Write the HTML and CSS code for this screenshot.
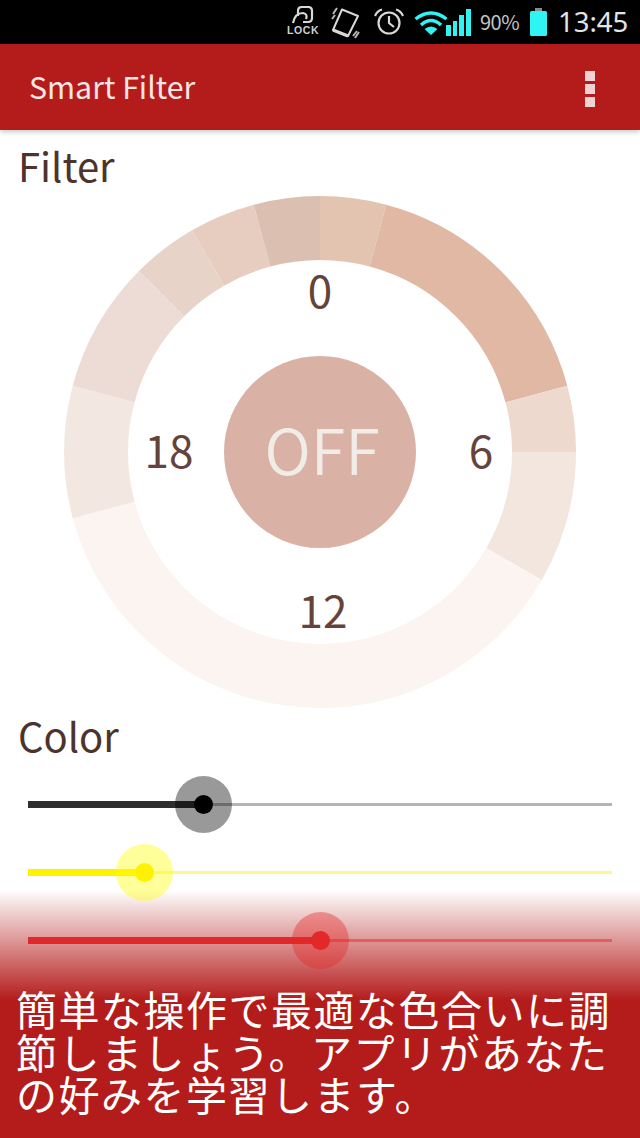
FILE: index.html
```html
<!DOCTYPE html>
<html lang="ja">
<head>
<meta charset="utf-8">
<title>Smart Filter</title>
<link rel="stylesheet" href="styles.css">
</head>
<body>
<div class="screen">
  <div class="statusbar">
    <div class="lock">
      <svg class="lock-icon" viewBox="0 0 26 18" width="26" height="18"><g fill="none" stroke="#d8d8d8" stroke-width="2.200"><path d="M8 10 V5 Q8 1 12 1 H18 Q22 1 22 5 V12 Q22 16 18 16 H13"/><path d="M3 17 Q5 7 13 7 Q18 8 16 13"/></g></svg>
      <span class="lock-label">LOCK</span>
    </div>
    <svg class="st-rotate" viewBox="0 0 30 32" width="30" height="32"><g fill="none" stroke="#d8d8d8" stroke-width="2"><path d="M12 2.500 L28 9 L18 29 L3 23 Z" stroke-linejoin="round"/><path d="M3 23 L18 29" stroke-width="3.500"/><path d="M3 7 L7 1 M2 12 L5 8 M23 29 L27 24 M25 31 L29 25" stroke="#b8b8b8"/></g></svg>
    <svg class="st-alarm" viewBox="0 0 30 28" width="30" height="28"><g fill="none" stroke="#d8d8d8" stroke-width="2.200"><circle cx="15" cy="15" r="10.500"/><path d="M15 8 V15 L20 19"/><path d="M1 8 Q3 3 8 1.500 M29 8 Q27 3 22 1.500"/></g></svg>
    <svg class="st-wifi" viewBox="0 0 34 26" width="34" height="26"><g fill="none" stroke="#2ef4f4" stroke-width="3.400"><path d="M1.500 9 Q17 -3 32.500 9"/><path d="M7 15 Q17 6 27 15"/></g><path d="M17 25 L10.500 19 Q17 14 23.500 19 Z" fill="#2ef4f4"/></svg>
    <div class="signal"><i class="b1"></i><i class="b2"></i><i class="b3"></i><i class="b4"></i></div>
    <span class="st-pct">90%</span>
    <svg class="st-batt" viewBox="0 0 17 28" width="17" height="28"><rect x="5" y="0" width="7" height="3" fill="#8a8a8a"/><rect x="0" y="3" width="17" height="25" rx="1.500" fill="#2ef4f4"/></svg>
    <span class="st-time">13:45</span>
  </div>
  <header class="appbar">
    <span class="app-title">Smart Filter</span>
    <div class="menu"><i></i><i></i><i></i></div>
  </header>
  <main class="content">
    <h2 class="heading">Filter</h2>
    <div class="dial">
      <svg viewBox="0 0 512 512" width="512" height="512">
        <g class="ring" transform="rotate(-90 256 256)">
          <circle class="seg s0" cx="256" cy="256" r="224" pathLength="360" stroke-dasharray="15 345" stroke-dashoffset="0"/>
          <circle class="seg s1" cx="256" cy="256" r="224" pathLength="360" stroke-dasharray="60 300" stroke-dashoffset="-15"/>
          <circle class="seg s2" cx="256" cy="256" r="224" pathLength="360" stroke-dasharray="15 345" stroke-dashoffset="-75"/>
          <circle class="seg s3" cx="256" cy="256" r="224" pathLength="360" stroke-dasharray="30 330" stroke-dashoffset="-90"/>
          <circle class="seg s4" cx="256" cy="256" r="224" pathLength="360" stroke-dasharray="135 225" stroke-dashoffset="-120"/>
          <circle class="seg s5" cx="256" cy="256" r="224" pathLength="360" stroke-dasharray="30 330" stroke-dashoffset="-255"/>
          <circle class="seg s6" cx="256" cy="256" r="224" pathLength="360" stroke-dasharray="30 330" stroke-dashoffset="-285"/>
          <circle class="seg s7" cx="256" cy="256" r="224" pathLength="360" stroke-dasharray="15 345" stroke-dashoffset="-315"/>
          <circle class="seg s8" cx="256" cy="256" r="224" pathLength="360" stroke-dasharray="15 345" stroke-dashoffset="-330"/>
          <circle class="seg s9" cx="256" cy="256" r="224" pathLength="360" stroke-dasharray="15 345" stroke-dashoffset="-345"/>
        </g>
        <circle class="hub" cx="256" cy="256" r="96"/>
        <text class="hub-label" x="258" y="279" text-anchor="middle">OFF</text>
        <text class="tick" x="256" y="112" text-anchor="middle">0</text>
        <text class="tick" x="417" y="272" text-anchor="middle">6</text>
        <text class="tick" x="259" y="432" text-anchor="middle">12</text>
        <text class="tick" x="105" y="272" text-anchor="middle">18</text>
      </svg>
    </div>
    <h2 class="heading heading-color">Color</h2>
    <div class="sliders">
      <div class="slider black">
        <div class="fill f-black"></div><div class="rest"></div><div class="thumb"><i></i></div>
      </div>
      <div class="slider yellow">
        <div class="fill f-yellow"></div><div class="rest"></div><div class="thumb"><i></i></div>
      </div>
      <div class="slider red">
        <div class="fill f-red"></div><div class="rest"></div><div class="thumb"><i></i></div>
      </div>
    </div>
  </main>
  <div class="coach">
    <p>簡単な操作で最適な色合いに調節しましょう。アプリがあなたの好みを学習します。</p>
  </div>
</div>
</body>
</html>
```
FILE: styles.css
```css
* { box-sizing: border-box; }
html, body { margin: 0; padding: 0; background: #fff; }
body { font-family: "Noto Sans CJK JP", "Noto Sans", sans-serif; }
.screen { position: relative; width: 640px; height: 1138px; overflow: hidden; background: #fff; }

.statusbar { height: 44px; background: #000; display: flex; align-items: center; color: #d8d8d8; padding-left: 290px; }
.lock { width: 26px; height: 30px; display: flex; flex-direction: column; align-items: center; }
.lock-icon { width: 26px; height: 18px; margin-top: -1px; }
.lock-label { font: 700 10.500px/11px "Liberation Sans", sans-serif; letter-spacing: 0.600px; margin-top: 1px; color: #cfcfcf; }
.st-rotate { margin-left: 14px; margin-top: 1px; }
.st-alarm { margin-left: 14px; }
.st-wifi { margin-left: 10px; margin-top: 1px; }
.signal { width: 26px; height: 27px; margin-left: -2px; display: flex; align-items: flex-end; gap: 2.200px; }
.signal i { display: block; width: 4.500px; background: #2ef4f4; }
.b1 { height: 11px; } .b2 { height: 15px; } .b3 { height: 21px; } .b4 { height: 27px; }
.st-pct { margin-left: 8px; width: 41px; font: 400 20px/28px "Noto Sans CJK JP", sans-serif; letter-spacing: -0.500px; color: #c4c4c4; }
.st-batt { margin-left: 9px; }
.st-time { margin-left: 11px; font: 400 27.500px/36px "Noto Sans", sans-serif; color: #e4e4e4; }

.appbar { height: 86px; background: #b41c1b; display: flex; align-items: center; justify-content: space-between; padding: 0 45px 0 29px; box-shadow: 0 2px 5px rgba(0,0,0,.22); position: relative; }
.app-title { color: #f6e6e6; font-size: 30.300px; line-height: 46px; font-weight: 400; margin-top: -3px; }
.menu { display: flex; flex-direction: column; gap: 3px; margin-top: 3px; }
.menu i { display: block; width: 10px; height: 10px; background: #f1d2d2; }

.content { padding: 0 28px 0 18px; }
.heading { margin: 0; font-size: 40px; line-height: 60px; font-weight: 400; color: #4e322c; }
.heading:first-child { padding-top: 5px; height: 66px; }
.dial { width: 512px; height: 512px; margin: 0 0 0 46px; }
.dial svg { display: block; }
.seg { fill: none; stroke-width: 64; }
.s0 { stroke: #e3c4b1; } .s1 { stroke: #e0b8a3; } .s2 { stroke: #eed9ce; } .s3 { stroke: #f2e6df; }
.s4 { stroke: #fbf4f0; } .s5 { stroke: #f2e8e1; } .s6 { stroke: #ecdcd5; } .s7 { stroke: #e8d3c8; }
.s8 { stroke: #e7cdc0; } .s9 { stroke: #dbbfb1; }
.hub { fill: #dab1a5; }
.hub-label { font-size: 63px; font-weight: 350; fill: #f0ece8; }
.tick { font-size: 44px; font-weight: 400; fill: #65433a; }
.heading-color { margin-top: -3px; }

.sliders { position: relative; z-index: 2; margin: 11px 0 0 10px; width: 584px; display: flex; flex-direction: column; gap: 11px; }
.slider { position: relative; height: 57px; display: flex; align-items: center; }
.thumb { position: absolute; top: 0; width: 57px; height: 57px; border-radius: 50%; display: flex; align-items: center; justify-content: center; }
.thumb i { display: block; width: 19px; height: 19px; border-radius: 50%; }
.fill { flex: none; height: 7px; }
.rest { flex: 1; height: 2.500px; }
.f-black { width: 175px; background: #2e2e2e; }
.black .thumb { left: 147px; background: rgba(0,0,0,.4); }
.black .thumb i { background: #000; }
.black .rest { background: #b4b4b4; }
.f-yellow { width: 116px; background: #fff200; }
.yellow .thumb { left: 88px; background: rgba(255,255,0,.4); }
.yellow .thumb i { background: #fff200; }
.yellow .rest { background: #fff78c; }
.f-red { width: 292px; background: #e22828; }
.red .thumb { left: 263.500px; background: rgba(229,40,40,.4); }
.red .thumb i { background: #e22828; }
.red .rest { background: rgba(229,40,40,.5); }

.coach { position: absolute; left: 0; right: 0; top: 890px; bottom: 0; padding: 97px 16px 0 16px; background: linear-gradient(to bottom, rgba(180,28,27,0) 0, #b41c1b 110px); }
.coach p { margin: 0; color: #fff; font-size: 41px; line-height: 42.500px; letter-spacing: 1.500px; }
```
